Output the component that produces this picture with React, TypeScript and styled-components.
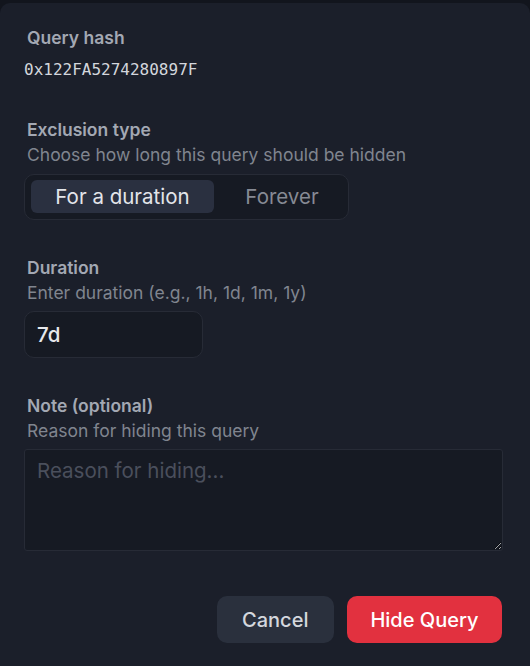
import React from "react";
import styled, { createGlobalStyle } from "styled-components";

const Global = createGlobalStyle`
  html, body { margin: 0; padding: 0; background: #12151d; }
  body { font-family: Inter, "Noto Sans", sans-serif; }
  * { box-sizing: border-box; }
`;

const Panel = styled.div`
  width: 530px;
  height: 663px;
  margin-top: 3px;
  background: #1b1f2a;
  border-radius: 10px 10px 0 0;
  padding: 24px 28px 0 24px;
  display: flex;
  flex-direction: column;
`;

const Section = styled.div<{ $gap: number }>`
  display: flex;
  flex-direction: column;
  margin-bottom: ${(p) => p.$gap}px;
`;

const Label = styled.div`
  font-size: 17.5px;
  font-weight: 600;
  color: #a3a8b3;
  line-height: 22px;
  padding-left: 3px;
`;

const Hint = styled.div`
  font-size: 17.5px;
  color: #80858f;
  line-height: 22px;
  padding-left: 3px;
  margin-top: 3px;
  margin-bottom: 7px;
`;

const Hash = styled.div`
  font-family: "DejaVu Sans Mono", "Liberation Mono", monospace;
  font-size: 16px;
  color: #d3d6dc;
  margin-top: 11px;
  line-height: 20px;
`;

const Segmented = styled.div`
  width: 325px;
  height: 46px;
  margin-top: 1px;
  padding: 5px 6px;
  display: flex;
  align-items: flex-start;
  background: #161a23;
  border: 1px solid #272b36;
  border-radius: 10px;
`;

const Segment = styled.button<{ $active?: boolean }>`
  flex: ${(p) => (p.$active ? "0 0 183px" : "1")};
  height: 33px;
  border: none;
  border-radius: 6px;
  font-family: inherit;
  font-size: 20.5px;
  background: ${(p) => (p.$active ? "#2a3040" : "transparent")};
  color: ${(p) => (p.$active ? "#e3e5ea" : "#868a94")};
  padding: ${(p) => (p.$active ? "0" : "0 0 0 8px")};
`;

const TextInput = styled.div`
  width: 179px;
  height: 47px;
  background: #161a23;
  border: 1px solid #272b36;
  border-radius: 10px;
  padding: 0 12px;
  display: flex;
  align-items: center;
  font-size: 20.5px;
  font-weight: 500;
  color: #e6e8ec;
`;

const TextArea = styled.textarea`
  width: 479px;
  height: 102px;
  background: #161a23;
  border: 1px solid #272b36;
  border-radius: 3px;
  padding: 8px 12px;
  font-family: inherit;
  font-size: 20.5px;
  color: #e6e8ec;
  resize: vertical;
  outline: none;
  color-scheme: dark;
  &::placeholder { color: #4a4f5c; }
`;

const Footer = styled.div`
  display: flex;
  justify-content: flex-end;
  gap: 13px;
  margin-top: 45px;
`;

const Button = styled.button<{ $primary?: boolean }>`
  height: 47px;
  padding: ${(p) => (p.$primary ? "0 23.5px" : "0 25.5px")};
  border: none;
  border-radius: 10px;
  font-family: inherit;
  font-size: 20px;
  font-weight: 500;
  background: ${(p) => (p.$primary ? "#e2313f" : "#2a303d")};
  color: ${(p) => (p.$primary ? "#ffffff" : "#d4d7dd")};
`;

export default function App() {
  return (
    <>
      <Global />
      <Panel>
        <Section $gap={39}>
          <Label>Query hash</Label>
          <Hash>0x122FA5274280897F</Hash>
        </Section>
        <Section $gap={37}>
          <Label>Exclusion type</Label>
          <Hint>Choose how long this query should be hidden</Hint>
          <Segmented>
            <Segment $active>For a duration</Segment>
            <Segment>Forever</Segment>
          </Segmented>
        </Section>
        <Section $gap={37}>
          <Label>Duration</Label>
          <Hint>Enter duration (e.g., 1h, 1d, 1m, 1y)</Hint>
          <TextInput>7d</TextInput>
        </Section>
        <Section $gap={0}>
          <Label>Note (optional)</Label>
          <Hint>Reason for hiding this query</Hint>
          <TextArea placeholder="Reason for hiding..." />
        </Section>
        <Footer>
          <Button>Cancel</Button>
          <Button $primary>Hide Query</Button>
        </Footer>
      </Panel>
    </>
  );
}
